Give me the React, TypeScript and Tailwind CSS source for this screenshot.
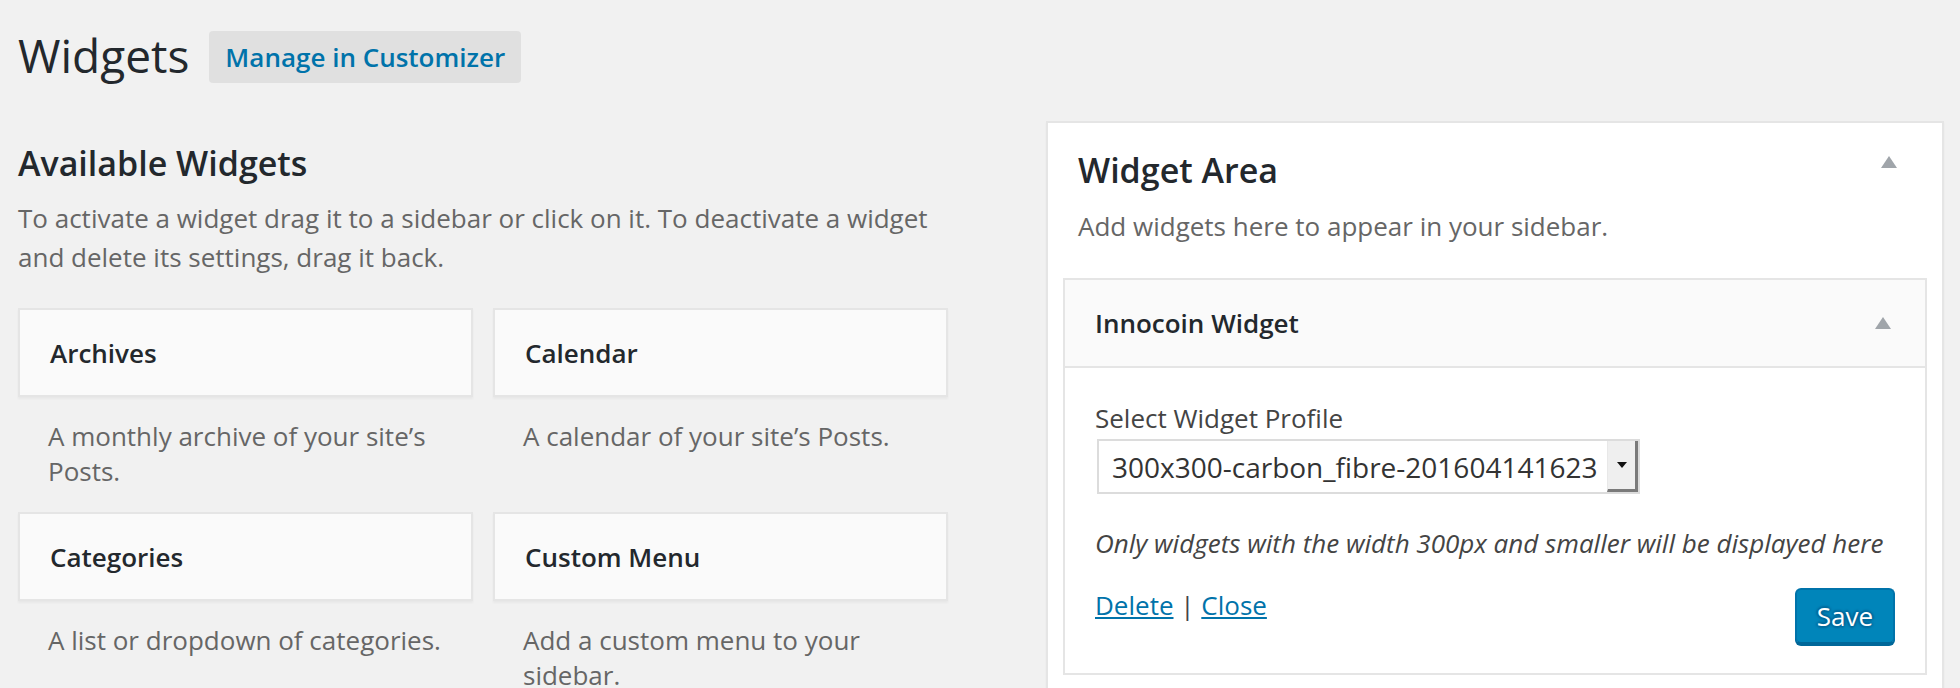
import React from "react";

function UpTriangle() {
  return (
    <svg width="16" height="12" viewBox="0 0 16 12" className="block">
      <polygon points="8,0 16,12 0,12" fill="#a0a5aa" />
    </svg>
  );
}

type W = { title: string; desc: string };

const widgets: W[] = [
  { title: "Archives", desc: "A monthly archive of your site\u2019s Posts." },
  { title: "Calendar", desc: "A calendar of your site\u2019s Posts." },
  { title: "Categories", desc: "A list or dropdown of categories." },
  { title: "Custom Menu", desc: "Add a custom menu to your sidebar." },
];

function WidgetItem({ w }: { w: W }) {
  return (
    <div>
      <div className="flex h-[89px] items-center border-2 border-[#e5e5e5] bg-[#fafafa] px-[30px] shadow-[0_2px_2px_rgba(0,0,0,0.04)]">
        <h3 className="text-[26px] font-semibold leading-[36px] text-[#23282d]">{w.title}</h3>
      </div>
      <p className="px-[30px] pb-[23px] pt-[22px] text-[26px] leading-[35px] text-[#666]">{w.desc}</p>
    </div>
  );
}

export default function App() {
  return (
    <div className="h-[688px] overflow-hidden bg-[#f1f1f1] font-['Open_Sans',sans-serif] text-[#444]">
      <div className="flex items-start pl-[18px] pt-[31px]">
        <h1 className="text-[46px] font-normal leading-[48px] text-[#23282d]">Widgets</h1>
        <a className="ml-[20px] rounded-[4px] bg-[#e0e0e0] px-4 py-2 text-[26px] font-semibold leading-[36px] text-[#0073aa]">
          Manage in Customizer
        </a>
      </div>

      <div className="mt-[38px] flex items-start">
        <div className="ml-[18px] w-[930px] shrink-0 pt-[22px]">
          <h2 className="text-[34px] font-semibold leading-[40px] text-[#23282d]">Available Widgets</h2>
          <p className="mt-[16px] text-[26px] leading-[39px] text-[#666]">
            To activate a widget drag it to a sidebar or click on it. To deactivate a widget and delete its settings, drag it back.
          </p>
          <div className="mt-[31px] grid grid-cols-2 gap-x-[20px]">
            {widgets.map((w) => (
              <WidgetItem key={w.title} w={w} />
            ))}
          </div>
        </div>

        <div className="ml-[98px] w-[898px] shrink-0 border-2 border-b-0 border-[#e5e5e5] bg-white pb-[13px] shadow-[0_2px_2px_rgba(0,0,0,0.04)]">
          <div className="flex items-start justify-between px-[30px] pt-[27px]">
            <h2 className="text-[34px] font-semibold leading-[40px] text-[#23282d]">Widget Area</h2>
            <div className="mr-[15px] mt-[6px]">
              <UpTriangle />
            </div>
          </div>
          <p className="mt-[17px] px-[30px] text-[26px] leading-[39px] text-[#666]">
            Add widgets here to appear in your sidebar.
          </p>

          <div className="mx-[15px] mt-[32px] border-2 border-[#e5e5e5] bg-white">
            <div className="flex h-[88px] items-center justify-between border-b-2 border-[#e5e5e5] bg-[#fafafa] pl-[30px] pr-[34px]">
              <h3 className="text-[26px] font-semibold leading-[36px] text-[#23282d]">Innocoin Widget</h3>
              <UpTriangle />
            </div>
            <div className="px-[30px] pb-[29px] pt-[32px]">
              <label className="block text-[26px] leading-[36px] text-[#444]">Select Widget Profile</label>
              <div className="ml-[2px] mt-[3px] flex h-[55px] w-[543px] items-stretch border-2 border-[#dcdcdc] bg-white">
                <div className="flex flex-1 items-center pl-[13px] text-[28px] leading-[38px] text-[#333]">
                  300x300-carbon_fibre-201604141623
                </div>
                <div className="flex w-[31px] items-center justify-center border-b-[3px] border-l border-r-[3px] border-b-[#7a7a7a] border-l-[#e8e8e8] border-r-[#7a7a7a] bg-[#efefef]">
                  <svg width="10" height="6" viewBox="0 0 10 6" className="block">
                    <polygon points="0,0 10,0 5,6" fill="#111" />
                  </svg>
                </div>
              </div>
              <p className="mt-[31px] text-[26px] italic leading-[36px] text-[#444]">
                Only widgets with the width 300px and smaller will be displayed here
              </p>
              <div className="mt-[26px] flex items-start justify-between">
                <div className="text-[26px] leading-[36px] text-[#444]">
                  <a className="text-[#0073aa] underline">Delete</a> | <a className="text-[#0073aa] underline">Close</a>
                </div>
                <button className="mt-[1px] h-[56px] rounded-[6px] border-2 border-[#0073aa] border-b-[#006799] bg-[#0085ba] px-[20px] text-[26px] leading-[52px] text-white shadow-[0_2px_0_#006799] [text-shadow:0_-2px_2px_#006799,2px_0_2px_#006799,0_2px_2px_#006799,-2px_0_2px_#006799]">
                  Save
                </button>
              </div>
            </div>
          </div>
        </div>
      </div>
    </div>
  );
}
